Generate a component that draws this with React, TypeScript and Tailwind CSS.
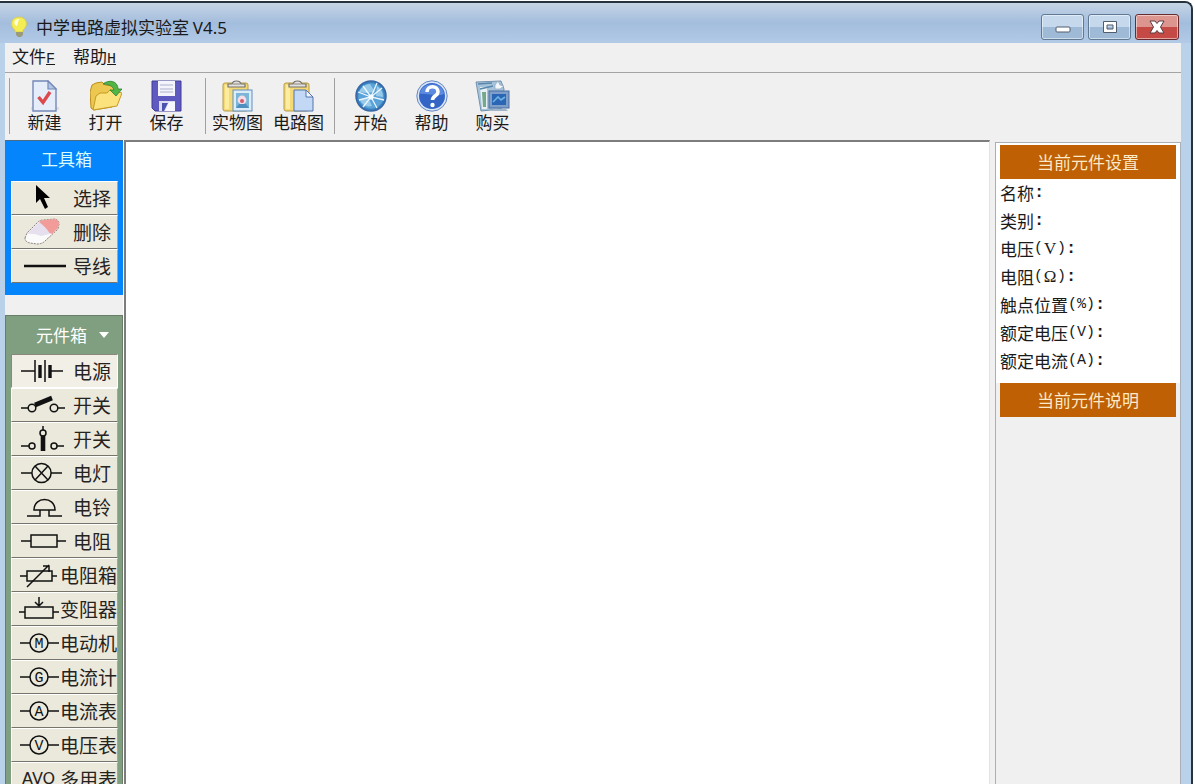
import React from "react";

type IconProps = { children: React.ReactNode };

function ToolIcon({ children }: IconProps) {
  return (
    <svg viewBox="0 0 32 32" className="size-8" aria-hidden="true">
      {children}
    </svg>
  );
}

const newIcon = (
  <ToolIcon>
    <path d="M2 27H30V30H2Z" fill="#dcdde2" />
    <path d="M4 1H19L27 9V31H4Z" fill="#e4edf9" stroke="#7388b8" strokeWidth="1.4" />
    <path d="M19 1V9H27Z" fill="#b4c6e6" stroke="#7388b8" strokeWidth="1.2" />
    <path d="M9.5 17L14 22.5L21 12" fill="none" stroke="#dc4a4e" strokeWidth="3.4" />
  </ToolIcon>
);

const openIcon = (
  <ToolIcon>
    <path d="M1 28L0 12L2 5L6 3L12 2L15 5L26 6V14L22 27L4 30Z" fill="#ecc850" stroke="#b98e1c" />
    <path d="M3 30L6 16L10 13L17 13L20 10L32 13L27 26Z" fill="#fbe27c" stroke="#c59a25" />
    <path d="M13 4C19 -1 28 1 28 9H32L26 16L20 10H24C23 6 18 4 13 4Z" fill="#52b445" stroke="#2b8130" strokeWidth="0.8" />
  </ToolIcon>
);

const saveIcon = (
  <ToolIcon>
    <path d="M1 1H30V31H4L1 28Z" fill="#5f5ac0" stroke="#413d98" />
    <path d="M7 1H24V16H7Z" fill="#f4f4fc" />
    <path d="M9 5H22M9 9H22M9 12H22" stroke="#aeb0cb" />
    <path d="M8 21H24V31H8Z" fill="#d9dcf0" />
    <path d="M11 23H17L13 31H11Z" fill="#4b52b0" />
    <path d="M18 22H24V31H14Z" fill="#f7f8ff" />
  </ToolIcon>
);

const clipboard = (
  <>
    <rect x="1" y="3" width="25" height="28" rx="2" fill="#f4d976" stroke="#b79b49" />
    <path d="M3 5V29H7V5Z" fill="#fbeca0" />
    <path d="M6 7V4H10C11 0 18 0 19 4H23V7Z" fill="#e3e2e0" stroke="#77736b" strokeWidth="1.2" />
    <path d="M11 4H18" stroke="#8b867d" />
  </>
);

const pictureIcon = (
  <ToolIcon>
    {clipboard}
    <rect x="11" y="10" width="19" height="21" fill="#dcecf8" stroke="#5f8fc0" />
    <rect x="14" y="13" width="13" height="15" fill="#7bb5d8" />
    <circle cx="20" cy="20" r="4.4" fill="#f3dde6" />
    <circle cx="20" cy="21" r="2" fill="#d25b6d" />
    <path d="M14 28L17 24H24L27 28Z" fill="#4e8fbf" />
  </ToolIcon>
);

const circuitIcon = (
  <ToolIcon>
    {clipboard}
    <path d="M11 10H23L30 17V31H11Z" fill="#c3d8f5" stroke="#5374ad" />
    <path d="M23 10V17H30Z" fill="#eff6ff" stroke="#5374ad" />
  </ToolIcon>
);

const startIcon = (
  <ToolIcon>
    <circle cx="16" cy="16" r="15" fill="#397fbe" stroke="#3768a6" strokeWidth="1.5" />
    <circle cx="16" cy="16" r="12.8" fill="#5aa3d8" />
    <path d="M4 12Q8 4 15 4L20 12L11 13ZM22 6Q28 10 28 17L21 16ZM5 20L13 17L17 26Q9 28 5 20Z" fill="#98cbea" />
    <path d="M3 12L16 17L29 20M22 3L16 17L8 27M16 17L22 28M4 20L16 17L27 8M8 6L16 17" fill="none" stroke="#edf7ff" strokeWidth="1.3" />
    <circle cx="16" cy="17" r="2.6" fill="#f5fbff" />
  </ToolIcon>
);

const helpIcon = (
  <ToolIcon>
    <circle cx="16" cy="16" r="15.2" fill="#d9e5f8" stroke="#6486c0" />
    <circle cx="16" cy="16" r="13" fill="#3365c6" />
    <path d="M4 14C5 1 27 1 28 14C21 17 11 13 4 14Z" fill="#5c8be0" />
    <path d="M11 12C11 5 22 5 22 12C22 16 16.5 15.5 16.5 20" fill="none" stroke="#fff" strokeWidth="3.6" />
    <circle cx="16.5" cy="25" r="2.2" fill="#fff" />
  </ToolIcon>
);

const buyIcon = (
  <svg viewBox="0 0 36 32" className="h-8 w-9" aria-hidden="true">
    <path d="M1 2L26 1L29 9L26 29L6 31Z" fill="#a7c3da" stroke="#7391ad" />
    <path d="M5 7H12V29H7Z" fill="#e6f0f4" />
    <path d="M7 12H11V27H8Z" fill="#75a889" />
    <path d="M3 4L17 3M5 9L18 6" stroke="#5987ad" strokeWidth="1.6" />
    <path d="M20 5L23 1L25 5L29 6L25 9H20Z" fill="#f3f7fb" stroke="#8aa6bf" strokeWidth="0.7" />
    <rect x="14" y="11" width="20" height="17" fill="#7f9fca" stroke="#4a6c9f" />
    <rect x="17" y="14" width="14" height="11" fill="#2b66b4" />
    <path d="M18 22L23 17L26 20L30 17" fill="none" stroke="#6bb3e2" strokeWidth="1.6" />
    <path d="M18 29H31L33 31H16Z" fill="#a1b6cb" />
  </svg>
);

const toolbarGroups = [
  {
    rule: "ml-1 mr-1",
    items: [
      { label: "新建", icon: newIcon },
      { label: "打开", icon: openIcon },
      { label: "保存", icon: saveIcon },
    ],
  },
  {
    rule: "ml-2 mr-px",
    items: [
      { label: "实物图", icon: pictureIcon },
      { label: "电路图", icon: circuitIcon },
    ],
  },
  {
    rule: "ml-[5px] mr-[5px]",
    items: [
      { label: "开始", icon: startIcon },
      { label: "帮助", icon: helpIcon },
      { label: "购买", icon: buyIcon },
    ],
  },
];

function Meter({ letter }: { letter: string }) {
  return (
    <>
      <circle cx="20" cy="16" r="9" />
      <path d="M1 16H11M29 16H40" />
      <text
        x="20"
        y="21"
        textAnchor="middle"
        fontSize="15"
        fill="#111"
        stroke="none"
        className="font-['Liberation_Mono',monospace]"
      >
        {letter}
      </text>
    </>
  );
}

const tools = [
  {
    label: "选择",
    icon: <path d="M17 3V21L21 17L26 27L29 25L25 16H31Z" fill="#000" stroke="none" />,
  },
  {
    label: "删除",
    icon: (
      <>
        <path
          d="M6 22L8 17L19 6Q21 4 25 4L36 3Q40 4 40 8L39 13L26 25Q23 28 18 28L11 27Q6 26 6 22Z"
          fill="#fbfafa"
          stroke="#8b7f7e"
          strokeWidth="1"
          strokeDasharray="2 1"
        />
        <path d="M20 6Q22 4 25 4L36 3Q40 4 40 8L39 12L33 18Q27 16 22 13Z" fill="#f29c9a" stroke="none" />
        <path d="M20 6L8 18Q15 17 22 20L31 18Q28 12 20 6Z" fill="#e6dfee" stroke="none" />
      </>
    ),
  },
  { label: "导线", icon: <path d="M5 16H47" strokeWidth="2.4" /> },
];

const parts = [
  {
    label: "电源",
    icon: (
      <>
        <path d="M2 16H16M16 5V27M26 5V27M31 16H44" />
        <path d="M21 10V23M31 10V23" strokeWidth="3.4" />
      </>
    ),
  },
  {
    label: "开关",
    icon: (
      <>
        <path d="M2 19H9M39 19H46" />
        <circle cx="13" cy="19" r="3.8" />
        <circle cx="35" cy="19" r="3.8" />
        <path d="M16 16L33 9" strokeWidth="4.6" />
      </>
    ),
  },
  {
    label: "开关",
    icon: (
      <>
        <path d="M2 23H10M38 23H45M24 3V7" />
        <circle cx="13" cy="23" r="3" />
        <circle cx="35" cy="23" r="3" />
        <circle cx="24" cy="10" r="3" />
        <path d="M24 13V28" strokeWidth="4.6" />
      </>
    ),
  },
  {
    label: "电灯",
    icon: (
      <>
        <circle cx="22.5" cy="16" r="9.6" />
        <path d="M2 16H13M32 16H43M16 9L29 23M29 9L16 23" />
      </>
    ),
  },
  {
    label: "电铃",
    icon: <path d="M15 19C15 5 36 5 36 19ZM8 25H21V19M30 19V25H43" />,
  },
  {
    label: "电阻",
    icon: (
      <>
        <rect x="12" y="10" width="26" height="12" />
        <path d="M2 16H12M38 16H47" />
      </>
    ),
  },
  {
    label: "电阻箱",
    icon: (
      <>
        <rect x="8" y="12" width="25" height="10" />
        <path d="M1 17H8M33 17H38M8 28L30 6M24 7H30V13" />
      </>
    ),
  },
  {
    label: "变阻器",
    icon: (
      <>
        <rect x="6" y="14" width="28" height="11" />
        <path d="M0 19H6M34 19H40M20 4V13M16 9L20 13L24 9" />
      </>
    ),
  },
  { label: "电动机", icon: <Meter letter="M" /> },
  { label: "电流计", icon: <Meter letter="G" /> },
  { label: "电流表", icon: <Meter letter="A" /> },
  { label: "电压表", icon: <Meter letter="V" /> },
  { label: "多用表", prefix: "AVO" },
];

type SideItem = { label: string; icon?: React.ReactNode; prefix?: string };

function SideButton({ item, active = false }: { item: SideItem; active?: boolean }) {
  const wide = item.label.length > 2;
  return (
    <button
      type="button"
      className={`flex h-[34px] w-full items-center justify-between overflow-hidden border pl-[7px] text-[19px] text-[#26231f] ${
        active
          ? "border-t-[#8b877c] border-r-white border-b-white border-l-[#8b877c] bg-[#f1efe6]"
          : "border-t-white border-r-[#a8a498] border-b-[#77746c] border-l-white bg-[#ebe9dc]"
      } ${wide ? "" : "pr-[6px]"}`}
    >
      {item.prefix ? (
        <span className="pl-[3px] font-['DejaVu_Sans',sans-serif] text-[16px]">{item.prefix}</span>
      ) : (
        <svg
          viewBox={wide ? "0 0 40 32" : "0 0 48 32"}
          className={wide ? "h-8 w-10 shrink-0" : "h-8 w-12 shrink-0"}
          fill="none"
          stroke="#111"
          strokeWidth="1.5"
          aria-hidden="true"
        >
          {item.icon}
        </svg>
      )}
      <span className="leading-7 whitespace-nowrap">{item.label}</span>
    </button>
  );
}

const fields: { name: string; unit?: string; full?: boolean }[] = [
  { name: "名称" },
  { name: "类别" },
  { name: "电压", unit: "V", full: true },
  { name: "电阻", unit: "Ω", full: true },
  { name: "触点位置", unit: "%" },
  { name: "额定电压", unit: "V" },
  { name: "额定电流", unit: "A" },
];

function PanelHeader({ children }: { children: React.ReactNode }) {
  return (
    <h2 className="flex h-[34px] items-center justify-center bg-[#be6003] text-[17px] text-[#fbe9c8]">
      {children}
    </h2>
  );
}

const caption =
  "flex h-[26px] items-center justify-center rounded-[3px] border shadow-[inset_0_0_0_1px_rgba(255,255,255,0.5)]";

export default function App() {
  return (
    <div className="h-screen overflow-hidden bg-white pt-px pr-[2px] font-['Noto_Sans_CJK_SC',sans-serif] text-[17px] text-[#1a1a1a]">
      <div className="flex h-full flex-col overflow-hidden rounded-tr-lg border-t-2 border-r-2 border-[#26323d] bg-[#bad1ea] pr-[10px] pl-[5px]">
        <header className="-mr-[10px] -ml-[5px] flex h-10 shrink-0 items-center bg-linear-to-b from-[#c5d4e5] via-[#a3bddd] to-[#b2cae6] pt-2 pr-3 pl-[10px]">
          <svg viewBox="0 0 18 22" className="h-[22px] w-[18px]" aria-hidden="true">
            <path d="M5 14C-1 10 1 1 9 1S19 10 13 14V16H5Z" fill="#f4ed54" stroke="#d6c94b" strokeWidth="0.8" />
            <path d="M5 9C3 5 6 3 9 3L7 10Z" fill="#fffde0" />
            <path d="M6 16H13V19L11 21H8L6 19Z" fill="#9a9b7c" />
          </svg>
          <h1 className="ml-2 flex-1 whitespace-nowrap">
            中学电路虚拟实验室 <span className="font-['Noto_Sans',sans-serif]">V4.5</span>
          </h1>
          <div className="flex gap-1">
            <button type="button" aria-label="最小化" className={`${caption} w-[43px] border-[#5f7893] bg-linear-to-b from-[#c5d8ec] from-50% to-[#9fbad7] to-50%`}>
              <svg viewBox="0 0 18 18" className="size-[18px]">
                <rect x="2" y="9" width="14" height="5" rx="1" fill="#fff" stroke="#4f5d6c" />
              </svg>
            </button>
            <button type="button" aria-label="最大化" className={`${caption} w-[43px] border-[#5f7893] bg-linear-to-b from-[#c5d8ec] from-50% to-[#9fbad7] to-50%`}>
              <svg viewBox="0 0 18 18" className="size-[18px]">
                <path d="M2.5 3.5H15.5V14.5H2.5ZM6 7V11H12V7Z" fill="#fff" fillRule="evenodd" stroke="#4f5d6c" />
              </svg>
            </button>
            <button type="button" aria-label="关闭" className={`${caption} w-[44px] border-[#6b2a2d] bg-linear-to-b from-[#dc958f] from-50% to-[#c54a45] to-50%`}>
              <svg viewBox="0 0 18 18" className="size-[18px]">
                <path d="M2 3H7L9 5.5L11 3H16L12.5 9L16 15H11L9 12.5L7 15H2L5.5 9Z" fill="#fff" stroke="#5c3b42" />
              </svg>
            </button>
          </div>
        </header>

        <nav className="flex h-[30px] shrink-0 items-center gap-[18px] border-b border-[#a4a4a4] bg-[#f0f0f0] pl-[7px]">
          {[
            ["文件", "F"],
            ["帮助", "H"],
          ].map(([label, key]) => (
            <button type="button" key={label} className="flex items-baseline">
              {label}
              <u className="font-['Liberation_Mono',monospace] text-[15px]">{key}</u>
            </button>
          ))}
        </nav>

        <div className="flex h-[67px] shrink-0 items-start bg-[#f0f0f0] pt-[5px]">
          {toolbarGroups.map((group, i) => (
            <div key={i} className="flex">
              <div className={`h-14 w-px bg-[#a0a0a0] ${group.rule}`} />
              {group.items.map((item) => (
                <button type="button" key={item.label} className="flex w-[61px] flex-col items-center pt-0.5">
                  {item.icon}
                  <span className="text-[17px] leading-5 whitespace-nowrap">{item.label}</span>
                </button>
              ))}
            </div>
          ))}
        </div>

        <div className="flex min-h-0 flex-1 bg-[#f0f0f0]">
          <aside className="flex w-[119px] shrink-0 flex-col border-r border-white">
            <section className="border-t border-[#4d6a85] bg-[#0485fb] px-[5px] pb-3 pl-[6px]">
              <h2 className="flex h-10 items-center justify-center pb-1 pl-1 text-[17px] text-[#dcfbff]">工具箱</h2>
              {tools.map((item) => (
                <SideButton key={item.label} item={item} />
              ))}
            </section>
            <section className="mt-5 flex-1 border border-b-0 border-[#6a7d69] bg-[#7f9f80] pr-1 pl-[5px]">
              <h2 className="flex h-[38px] items-center justify-center gap-3 pl-4 text-[17px] text-white">
                元件箱
                <svg viewBox="0 0 10 6" className="h-[6px] w-[10px]" aria-hidden="true">
                  <path d="M0 0H10L5 6Z" fill="#fff" />
                </svg>
              </h2>
              {parts.map((item, i) => (
                <SideButton key={i} item={item} active={i === 0} />
              ))}
            </section>
          </aside>

          <main className="flex-1 border-t-2 border-r border-l-2 border-t-[#7d7d7d] border-r-[#e3e3e3] border-l-[#7d7d7d] bg-white" />

          <aside className="mt-[2px] ml-[5px] w-[186px] shrink-0 border border-b-0 border-[#a7b0b8] px-[4px] pt-[2px]">
            <div className="-mx-[4px] -mt-[2px] bg-white px-[4px] pt-[2px] pb-2">
              <PanelHeader>当前元件设置</PanelHeader>
              <dl>
                {fields.map((f) => (
                  <dt key={f.name} className="flex h-7 items-center whitespace-nowrap">
                    {f.name}
                    {f.unit && (
                      <span className="flex items-center font-['Liberation_Mono',monospace] text-[15px]">
                        (
                        {f.full ? (
                          <span className="w-[14px] text-center font-['Liberation_Serif',serif] text-[17px]">{f.unit}</span>
                        ) : (
                          f.unit
                        )}
                        )
                      </span>
                    )}
                    <b className="font-['Liberation_Mono',monospace]">:</b>
                  </dt>
                ))}
              </dl>
            </div>
            <PanelHeader>当前元件说明</PanelHeader>
          </aside>
        </div>
      </div>
    </div>
  );
}
